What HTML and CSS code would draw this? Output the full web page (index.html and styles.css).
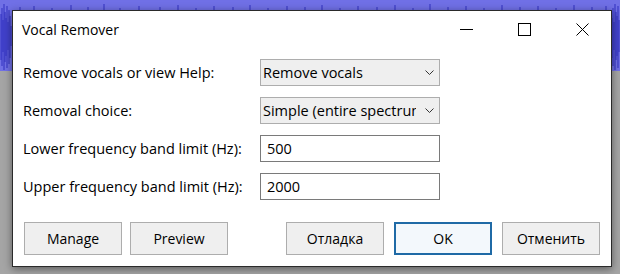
FILE: index.html
```html
<!DOCTYPE html>
<html lang="en">
<head>
    <meta charset="UTF-8">
    <meta name="viewport" content="width=device-width, initial-scale=1.0">
    <title>Vocal Remover</title>
    <link rel="stylesheet" href="styles.css">
</head>
<body>
    <div class="desktop">
        <!-- Audacity waveform behind the dialog -->
        <svg class="wave" width="620" height="274" viewBox="0 0 620 274">
            <rect x="0" y="0" width="620" height="71" fill="#7070e6"/>
            <path d="M1 14V60M2 8V66M3 20V52M4 4V70M5 12V62M6 18V56M7 6V68M8 22V50M9 10V64M10 16V58M11 26V46
                     M20 7V10M34 6V10M52 8V10M71 5V10M88 7V10M104 4V10M120 8V10M139 6V10M160 7V10M178 5V10
                     M196 8V10M214 6V10M233 7V10M250 5V10M268 8V10M287 6V10M305 7V10M322 5V10M340 8V10
                     M358 6V10M377 7V10M395 5V10M413 8V10M430 4V10M448 7V10M466 6V10M484 8V10M502 5V10
                     M520 7V10M538 6V10M556 8V10M574 5V10M592 7V10M606 6V10
                     M612 18V58M613 8V66M614 22V50M615 4V70M616 12V60M617 16V56M618 6V68M619 20V52"
                  stroke="#3030c0" stroke-width="1" fill="none"/>
            <rect x="0" y="71" width="620" height="203" fill="#a5a5a5"/>
        </svg>

        <div class="dialog">
            <div class="titlebar">
                <span class="title">Vocal Remover</span>
                <div class="caption-buttons">
                    <span class="cap-btn">
                        <svg width="13" height="13" viewBox="0 0 13 13"><path d="M0 6.5H13" stroke="#000" stroke-width="1"/></svg>
                    </span>
                    <span class="cap-btn">
                        <svg width="13" height="13" viewBox="0 0 13 13"><rect x="0.5" y="0.5" width="12" height="12" fill="none" stroke="#000" stroke-width="1"/></svg>
                    </span>
                    <span class="cap-btn">
                        <svg width="13" height="13" viewBox="0 0 13 13"><path d="M0.5 0.5L12.5 12.5M12.5 0.5L0.5 12.5" stroke="#000" stroke-width="1"/></svg>
                    </span>
                </div>
            </div>

            <div class="form">
                <div class="row">
                    <label>Remove vocals or view Help:</label>
                    <div class="combo">
                        <span class="combo-text">Remove vocals</span>
                        <svg class="chevron" width="9" height="5" viewBox="0 0 9 5"><path d="M0.5 0.5L4.5 4.5L8.5 0.5" stroke="#333" fill="none"/></svg>
                    </div>
                </div>
                <div class="row">
                    <label>Removal choice:</label>
                    <div class="combo">
                        <span class="combo-text">Simple (entire spectrum)</span>
                        <svg class="chevron" width="9" height="5" viewBox="0 0 9 5"><path d="M0.5 0.5L4.5 4.5L8.5 0.5" stroke="#333" fill="none"/></svg>
                    </div>
                </div>
                <div class="row">
                    <label for="low">Lower frequency band limit (Hz):</label>
                    <input class="field" id="low" type="text" value="500">
                </div>
                <div class="row">
                    <label for="high">Upper frequency band limit (Hz):</label>
                    <input class="field" id="high" type="text" value="2000">
                </div>
            </div>

            <div class="buttons">
                <div class="group">
                    <button class="btn">Manage</button>
                    <button class="btn">Preview</button>
                </div>
                <div class="group group-right">
                    <button class="btn">Отладка</button>
                    <button class="btn btn-default">OK</button>
                    <button class="btn">Отменить</button>
                </div>
            </div>
        </div>
    </div>
</body>
</html>
```

FILE: styles.css
```css
body {
    margin: 0;
    font-family: "Open Sans", "Noto Sans", Arial, sans-serif;
    font-size: 14px;
    color: #000;
    overflow: hidden;
}

.desktop {
    position: relative;
    width: 620px;
    height: 274px;
    padding: 10px 0 0 12px;
    box-sizing: border-box;
    background: #a5a5a5;
}

.wave {
    position: absolute;
    top: 0;
    left: 0;
}

.dialog {
    position: relative; /* au-dessus du fond */
    width: 600px;
    height: 257px;
    box-sizing: border-box;
    background: #fff;
    border: 1px solid #2a2a2a;
    box-shadow: 0 2px 8px rgba(0, 0, 0, 0.45);
    display: flex;
    flex-direction: column;
}

/* Barre de titre */
.titlebar {
    height: 37px;
    display: flex;
    align-items: center;
    justify-content: space-between;
}

.title {
    padding-left: 9px;
    padding-bottom: 1px;
}

.caption-buttons {
    display: flex;
    height: 100%;
}

.cap-btn {
    width: 58px;
    display: flex;
    align-items: center;
    justify-content: center;
}

/* Formulaire */
.form {
    padding: 11px 10px 0 10px;
    display: flex;
    flex-direction: column;
    gap: 11px;
    font-size: 14.5px;
}

.row {
    display: flex;
    align-items: center;
    height: 27px;
}

.row label {
    width: 237px;
    flex-shrink: 0;
}

.combo {
    width: 180px;
    height: 27px;
    box-sizing: border-box;
    border: 1px solid #adadad;
    background: #efefef;
    display: flex;
    align-items: center;
    padding-left: 2px;
}

.combo-text {
    flex: 1;
    overflow: hidden;
    white-space: nowrap;
}

.chevron {
    margin: 0 5px 0 9px;
    flex-shrink: 0;
}

.field {
    width: 180px;
    height: 27px;
    box-sizing: border-box;
    border: 1px solid #7a7a7a;
    background: #fff;
    padding: 0 6px;
    margin: 0;
    font: inherit;
    color: #000;
    outline: none;
}

/* Boutons du bas */
.buttons {
    margin-top: 22px;
    padding: 0 11px;
    display: flex;
    justify-content: space-between;
}

.group {
    display: flex;
    gap: 8px;
}

.group-right {
    gap: 10px;
}

.btn {
    width: 98px;
    height: 33px;
    box-sizing: border-box;
    border: 1px solid #adadad;
    background: #efefef;
    font: inherit;
    color: #000;
    padding: 0;
}

.btn-default {
    border: 2px solid #1f6aa6;
    background: #f3f8fc;
}
```
